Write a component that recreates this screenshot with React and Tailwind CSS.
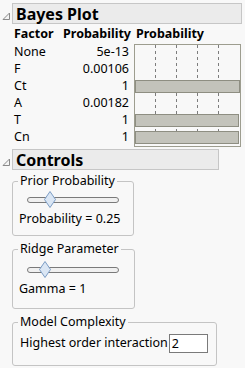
import React from 'react';

const rows = [
  { f: 'None', p: '5e-13', bar: false },
  { f: 'F', p: '0.00106', bar: false },
  { f: 'Ct', p: '1', bar: true },
  { f: 'A', p: '0.00182', bar: false },
  { f: 'T', p: '1', bar: true },
  { f: 'Cn', p: '1', bar: true },
];

function Tri() {
  return (
    <svg width="12" height="12" viewBox="0 0 12 12" className="shrink-0">
      <path d="M9.5 3 L9.5 9.5 L3 9.5 Z" fill="#f4f4f4" stroke="#8a8a8a" strokeWidth="1" />
    </svg>
  );
}

function Header({ title, width }) {
  return (
    <div className="flex items-center">
      <div className="w-[12px] pt-[4px]"><Tri /></div>
      <div className={`${width} h-[21px] bg-[#ebebeb] border border-[#c6c6c6] pl-[3px] flex items-center font-bold text-[16px] leading-none`}>
        {title}
      </div>
    </div>
  );
}

function Plot() {
  return (
    <svg width="107" height="103" viewBox="0 0 107 103">
      <rect x="0.5" y="0.5" width="106" height="102" fill="#f8f8f8" stroke="#9d9d8f" />
      {[21.5, 42.5, 63.5, 84.5].map(x => (
        <line key={x} x1={x} y1="1" x2={x} y2="102" stroke="#7d7d7d" strokeDasharray="3 3" />
      ))}
      {rows.map((r, i) => r.bar ? (
        <rect key={r.f} x="1.5" y={i * 17 + 2.5} width={i === 2 ? 104 : 103} height="12" fill="#c3c3bb" stroke="#8e8e82" />
      ) : null)}
    </svg>
  );
}

function Slider({ pos }) {
  return (
    <div className="relative h-[17px] ml-[14px] w-[92px]">
      <div className="absolute left-0 right-0 top-[6px] h-[6px] rounded-full border border-[#7a7a7a] bg-[#f0f0f0]" />
      <svg className="absolute top-0" style={{ left: pos - 6 }} width="12" height="17" viewBox="0 0 12 17">
        <path d="M6 0.5 L11.5 8.5 L6 16.5 L0.5 8.5 Z" fill="#dae6f4" stroke="#7b9cc4" />
      </svg>
    </div>
  );
}

export default function App() {
  return (
    <div className="w-[245px] h-[368px] bg-[#f8f8f8] font-['Noto_Sans',sans-serif] text-[12.5px] text-black overflow-hidden whitespace-nowrap">
      <div className="pt-[3px]">
        <Header title="Bayes Plot" width="w-[230px]" />
      </div>
      <div className="pl-[14px] pt-[2px]">
        <div className="flex h-[17px] items-center font-bold leading-none">
          <div className="w-[45px]">Factor</div>
          <div className="w-[72px] text-right">Probability</div>
          <div className="ml-[5px]">Probability</div>
        </div>
        <div className="flex mt-[1px]">
          <div className="w-[115px]">
            {rows.map(r => (
              <div key={r.f} className="h-[17px] flex items-center justify-between leading-none">
                <span>{r.f}</span>
                <span>{r.p}</span>
              </div>
            ))}
          </div>
          <div className="ml-[5px]"><Plot /></div>
        </div>
      </div>
      <div className="mt-[2px]">
        <Header title="Controls" width="w-[207px]" />
      </div>
      <div className="pl-[12px] mt-[3px] flex flex-col">
        <fieldset className="w-[122px] border border-[#c4c4c4] rounded-[3px] pb-[8px]">
          <legend className="ml-[5px] px-[2px] leading-[16px]">Prior Probability</legend>
          <div className="mt-[2px]"><Slider pos={23} /></div>
          <div className="pl-[6px] mt-[3px] leading-[16px]">Probability = 0.25</div>
        </fieldset>
        <fieldset className="w-[123px] border border-[#c4c4c4] rounded-[3px] pb-[11px] mt-[5px]">
          <legend className="ml-[5px] px-[2px] leading-[16px]">Ridge Parameter</legend>
          <div className="mt-[4px]"><Slider pos={18} /></div>
          <div className="pl-[6px] mt-[3px] leading-[16px]">Gamma = 1</div>
        </fieldset>
        <fieldset className="w-[205px] border border-[#c4c4c4] rounded-[3px] pb-[12px] mt-[5px]">
          <legend className="ml-[5px] px-[2px] leading-[16px]">Model Complexity</legend>
          <div className="flex items-center pl-[7px] mt-[4px]">
            <span>Highest order interaction</span>
            <div className="ml-[1px] w-[39px] h-[19px] bg-white border border-[#7a7a7a] pl-[2px] leading-[17px]">2</div>
          </div>
        </fieldset>
      </div>
    </div>
  );
}
